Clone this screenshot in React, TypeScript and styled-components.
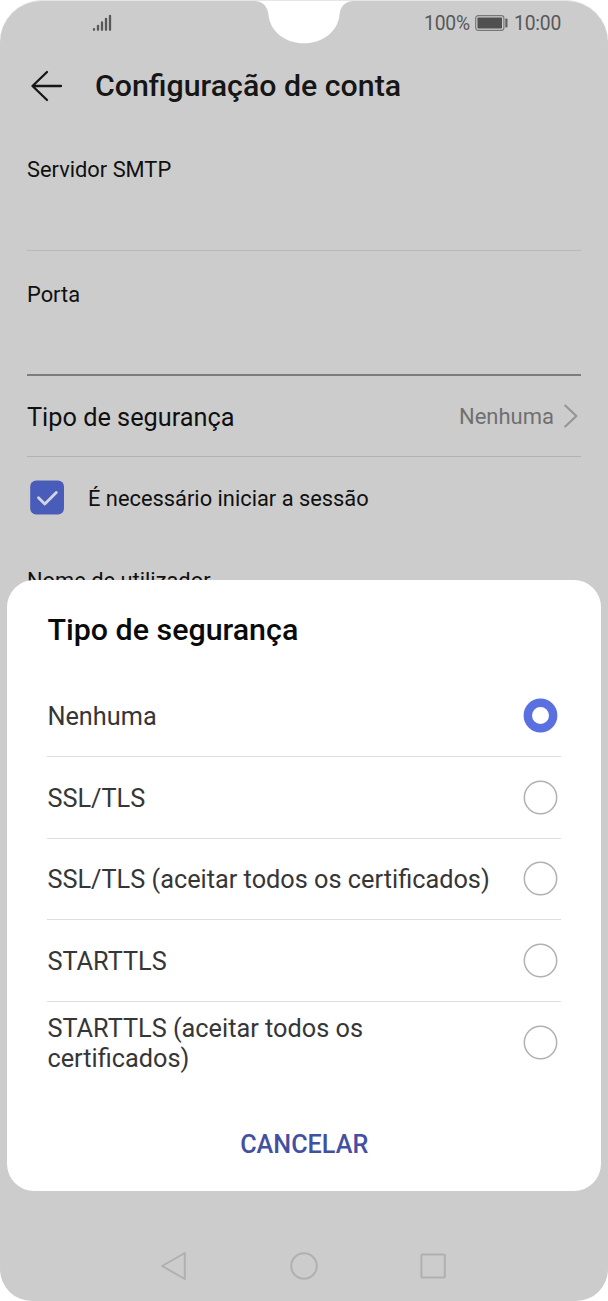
import React, { useState } from 'react';
import styled, { createGlobalStyle } from 'styled-components';

const GlobalStyle = createGlobalStyle`
  * { box-sizing: border-box; }
  body { margin: 0; background: #fff; font-family: Roboto, "Liberation Sans", sans-serif; }
`;

const Phone = styled.div`
  position: relative;
  width: 608px;
  height: 1301px;
  overflow: hidden;
  display: flex;
  flex-direction: column;
  background: #ccc;
  border-top: 1px solid #e6e6e6;
  border-radius: 42px 42px 32px 32px;
`;

const Notch = styled.svg`
  position: absolute;
  top: -1px;
  left: 250px;
`;

const StatusBar = styled.header`
  display: flex;
  align-items: center;
  justify-content: space-between;
  height: 44px;
  padding: 0 47px 0 92px;
  color: #585858;
`;

const StatusGroup = styled.div`
  display: flex;
  align-items: center;
  gap: 5px;
`;

const StatusText = styled.span<{ $width: number }>`
  width: ${(p) => p.$width}px;
  padding-top: 2px;
  font-size: 19.3px;
  line-height: 24px;
  letter-spacing: -0.2px;
  white-space: nowrap;
`;

const TitleBar = styled.div`
  display: flex;
  align-items: center;
  height: 82px;
  padding-left: 30px;
  gap: 31px;
`;

const Title = styled.h1`
  margin: 0;
  font-size: 30.3px;
  line-height: 36px;
  font-weight: 500;
  color: #161616;
`;

const Form = styled.main`
  display: flex;
  flex-direction: column;
  padding: 0 27px;
`;

const Field = styled.div<{ $strong?: boolean }>`
  height: ${(p) => (p.$strong ? 125 : 124)}px;
  padding-top: ${(p) => (p.$strong ? 31 : 30)}px;
  border-bottom: ${(p) => (p.$strong ? '2px solid #7c7c7c' : '1px solid #b8b8b8')};
`;

const Label = styled.div`
  font-size: 21.85px;
  line-height: 26px;
  color: #101010;
  white-space: nowrap;
`;

const SecurityRow = styled.div`
  display: flex;
  align-items: center;
  justify-content: space-between;
  height: 81px;
  padding-right: 3px;
  border-bottom: 1px solid #b2b2b2;
`;

const RowTitle = styled.span`
  padding-top: 4px;
  font-size: 25.3px;
  line-height: 30px;
  color: #101010;
`;

const RowValue = styled.span`
  display: flex;
  align-items: center;
  gap: 9px;
  font-size: 22px;
  color: #707070;
`;

const CheckRow = styled.label`
  display: flex;
  align-items: center;
  gap: 24px;
  height: 81px;
  padding-left: 3px;
`;

const CheckBox = styled.svg`
  display: block;
`;

const CheckLabel = styled(Label)`
  padding-top: 2px;
`;

const UserLabel = styled(Label)`
  padding-top: 30px;
`;

const Sheet = styled.section`
  position: absolute;
  left: 7px;
  top: 579px;
  width: 594px;
  height: 610.5px;
  display: flex;
  flex-direction: column;
  padding: 32px 40px 0 40.4px;
  border-radius: 27px;
  background: #fff;
`;

const SheetTitle = styled.h2`
  margin: 0 0 27.4px;
  font-size: 30.4px;
  line-height: 36px;
  font-weight: 500;
  color: #0a0a0a;
`;

const Options = styled.div`
  display: flex;
  flex-direction: column;
`;

const Option = styled.div`
  display: flex;
  align-items: center;
  justify-content: space-between;
  height: 81.6px;
  padding-right: 3px;
  border-bottom: 1px solid #dedede;
  cursor: pointer;

  &:last-child { border-bottom-color: transparent; }
`;

const OptionText = styled.span`
  max-width: 450px;
  padding-top: 3px;
  font-size: 25.3px;
  line-height: 30px;
  white-space: pre-line;
  color: #363636;
`;

const RadioMark = styled.svg`
  display: block;
  flex: none;
`;

const Cancel = styled.button`
  align-self: center;
  margin-top: 47px;
  padding: 0;
  border: 0;
  background: none;
  font: 500 25.2px/30px Roboto, "Liberation Sans", sans-serif;
  color: #43509f;
`;

const NavBar = styled.nav`
  display: flex;
  align-items: center;
  justify-content: center;
  gap: 101px;
  height: 70px;
  margin-top: auto;
`;

const options = [
  'Nenhuma',
  'SSL/TLS',
  'SSL/TLS (aceitar todos os certificados)',
  'STARTTLS',
  'STARTTLS (aceitar todos os\ncertificados)',
];

function Radio({ on }: { on: boolean }) {
  return (
    <RadioMark width="35" height="35" viewBox="0 0 35 35" fill="none">
      {on ? (
        <circle cx="17.5" cy="17.5" r="12.7" stroke="#5a6fe0" strokeWidth="8.4" />
      ) : (
        <circle cx="17.5" cy="17.5" r="16.2" stroke="#b1b1b1" strokeWidth="1.5" />
      )}
    </RadioMark>
  );
}

export default function App() {
  const [selected, setSelected] = useState(0);
  return (
    <>
      <GlobalStyle />
      <Phone>
        <StatusBar>
          <svg width="20" height="18" viewBox="0 0 20 18" stroke="#585858" strokeWidth="2.3" strokeLinecap="round">
            <path d="M2 15.2v.6M6 11.8v4M10 8.5v7.3M14 4.8v11M18 1.8v14" />
          </svg>
          <StatusGroup>
            <StatusText $width={46}>100%</StatusText>
            <svg width="34" height="16" viewBox="0 0 34 16">
              <rect x=".7" y=".7" width="28.2" height="14.6" rx="2.5" fill="none" stroke="#777" strokeWidth="1.2" />
              <rect x="2.5" y="2.5" width="24.5" height="11" rx=".7" fill="#505050" />
              <rect x="30.3" y="3.5" width="2.2" height="9" rx=".8" fill="#606060" />
            </svg>
            <StatusText $width={47}>10:00</StatusText>
          </StatusGroup>
        </StatusBar>
        <Notch width="108" height="45" viewBox="250 0 108 45">
          <path fill="#fff" d="M254 0V1C263 1 268 7 268.5 15C270 31 285 43.3 304 43.3C323 43.3 338 31 339.5 15C340 7 345 1 354 1V0Z" />
        </Notch>
        <TitleBar>
          <svg width="34" height="34" viewBox="0 0 34 34" fill="none" stroke="#161616" strokeWidth="2.3" strokeLinecap="round" strokeLinejoin="round">
            <path d="M31 17H2.5M17 3L2.5 17L17 31" />
          </svg>
          <Title>Configuração de conta</Title>
        </TitleBar>
        <Form>
          <Field><Label>Servidor SMTP</Label></Field>
          <Field $strong><Label>Porta</Label></Field>
          <SecurityRow>
            <RowTitle>Tipo de segurança</RowTitle>
            <RowValue>
              Nenhuma
              <svg width="15" height="24" viewBox="0 0 15 24" fill="none" stroke="#959595" strokeWidth="2.1" strokeLinecap="round" strokeLinejoin="round">
                <path d="M2.2 1.5L13.4 12L2.2 22.5" />
              </svg>
            </RowValue>
          </SecurityRow>
          <CheckRow>
            <CheckBox width="34" height="36" viewBox="0 .5 34 36" fill="none">
              <rect x=".2" y="1" width="33.8" height="34" rx="6" fill="#4a5cba" />
              <path d="M8.5 18.2L14.8 24.6L26.3 13" stroke="#d2d5e3" strokeWidth="2.8" strokeLinecap="round" strokeLinejoin="round" />
            </CheckBox>
            <CheckLabel as="span">É necessário iniciar a sessão</CheckLabel>
          </CheckRow>
          <UserLabel>Nome de utilizador</UserLabel>
        </Form>
        <NavBar>
          <svg width="27" height="30" viewBox="0 0 27 30" fill="none" stroke="#b0b0b0" strokeWidth="2" strokeLinejoin="round">
            <path d="M1.1 15L23.8 2V28Z" />
          </svg>
          <svg width="30" height="30" viewBox="0 0 30 30" fill="none" stroke="#b0b0b0" strokeWidth="2">
            <circle cx="15" cy="15" r="12.8" />
          </svg>
          <svg width="27" height="30" viewBox="0 0 27 30" fill="none" stroke="#b0b0b0" strokeWidth="2">
            <rect x="1.4" y="3.4" width="23.4" height="23.2" rx="1" />
          </svg>
        </NavBar>
        <Sheet>
          <SheetTitle>Tipo de segurança</SheetTitle>
          <Options>
            {options.map((text, i) => (
              <Option key={text} onClick={() => setSelected(i)}>
                <OptionText>{text}</OptionText>
                <Radio on={i === selected} />
              </Option>
            ))}
          </Options>
          <Cancel>CANCELAR</Cancel>
        </Sheet>
      </Phone>
    </>
  );
}
